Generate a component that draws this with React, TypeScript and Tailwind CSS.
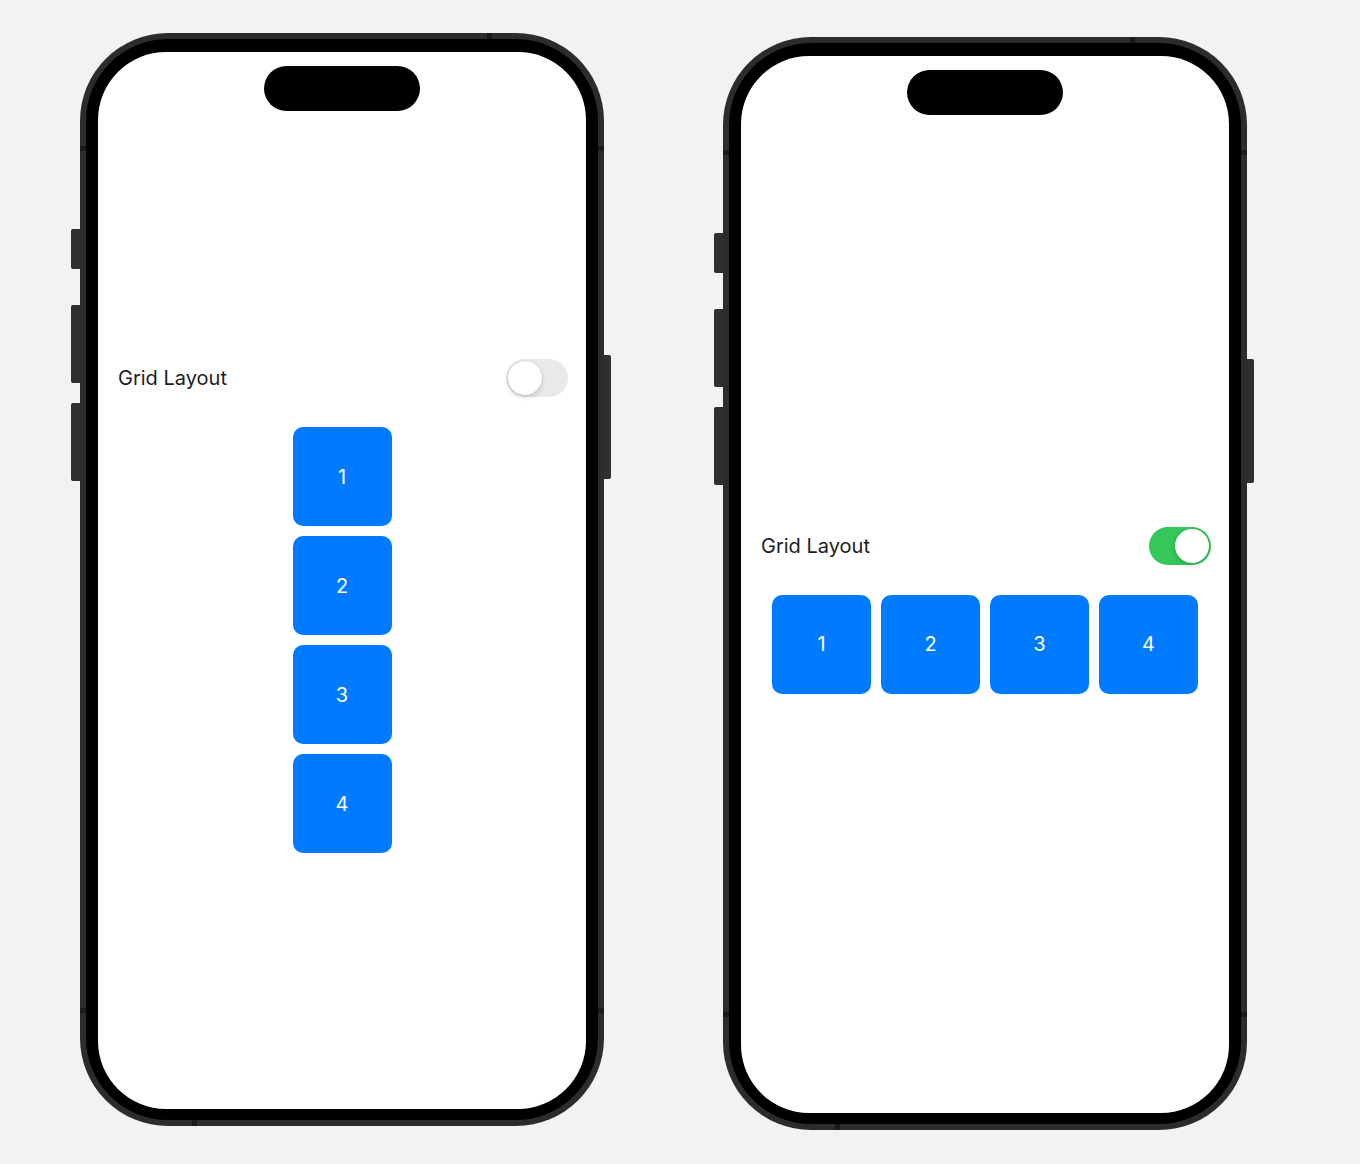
import React from 'react'

type PhoneProps = {
	grid: boolean
	offset: string
}

function Toggle({ on }: { on: boolean }) {
	return (
		<div
			className={
				'flex h-[38px] w-[62px] items-center rounded-full p-[2px] ' +
				(on ? 'justify-end bg-[#34c759]' : 'justify-start bg-[#e9e9eb]')
			}
		>
			<div className="h-[34px] w-[34px] rounded-full bg-white shadow-[0_2px_5px_rgba(0,0,0,0.18),0_0_0_0.5px_rgba(0,0,0,0.05)]" />
		</div>
	)
}

function Tile({ n }: { n: number }) {
	return (
		<div className="flex h-[99px] w-[99px] items-center justify-center rounded-[10px] bg-[#007aff] text-[20px] text-white">
			{n}
		</div>
	)
}

function Phone({ grid, offset }: PhoneProps) {
	return (
		<div className={'relative w-[524px] h-[1093px] ' + offset}>
			{/* side buttons */}
			<div className="absolute left-[-9px] top-[196px] h-[40px] w-[9px] rounded-l-[2px] bg-[#2f2f2f]" />
			<div className="absolute left-[-9px] top-[272px] h-[78px] w-[9px] rounded-l-[2px] bg-[#2f2f2f]" />
			<div className="absolute left-[-9px] top-[370px] h-[78px] w-[9px] rounded-l-[2px] bg-[#2f2f2f]" />
			<div className="absolute right-[-7px] top-[322px] h-[124px] w-[7px] rounded-r-[2px] bg-[#2f2f2f]" />

			<div className="relative h-full w-full rounded-[88px] bg-[#2c2c2c] p-[6px]">
				{/* antenna bands */}
				<div className="absolute left-0 top-[113px] h-[5px] w-[6px] bg-[#1a1a1a]" />
				<div className="absolute right-0 top-[113px] h-[5px] w-[6px] bg-[#1a1a1a]" />
				<div className="absolute left-0 bottom-[113px] h-[5px] w-[6px] bg-[#1a1a1a]" />
				<div className="absolute right-0 bottom-[113px] h-[5px] w-[6px] bg-[#1a1a1a]" />
				<div className="absolute bottom-0 left-[112px] h-[6px] w-[5px] bg-[#1a1a1a]" />
				<div className="absolute top-0 right-[112px] h-[6px] w-[5px] bg-[#1a1a1a]" />

				<div className="h-full w-full rounded-[82px] bg-black px-[12px] pt-[13px] pb-[11px]">
					<div className="relative flex h-full w-full flex-col justify-center rounded-[68px] bg-white pt-[51px]">
						<div className="absolute left-1/2 top-[14px] h-[45px] w-[156px] -translate-x-1/2 rounded-full bg-black" />

						<div className="flex items-center justify-between pl-5 pr-[18px]">
							<span className="text-[20px] text-[#1c1c1e]">Grid Layout</span>
							<Toggle on={grid} />
						</div>

						<div
							className={
								'mt-[30px] flex justify-center gap-[10px] ' +
								(grid ? 'flex-row' : 'flex-col items-center')
							}
						>
							{[1, 2, 3, 4].map((n) => (
								<Tile key={n} n={n} />
							))}
						</div>
					</div>
				</div>
			</div>
		</div>
	)
}

export default function App() {
	return (
		<div
			className="flex min-h-[1164px] w-[1360px] items-start gap-[119px] bg-[#f2f2f2] pl-[80px]"
			style={{ fontFamily: 'Inter, "Noto Sans", sans-serif' }}
		>
			<Phone grid={false} offset="mt-[33px]" />
			<Phone grid={true} offset="mt-[37px]" />
		</div>
	)
}
